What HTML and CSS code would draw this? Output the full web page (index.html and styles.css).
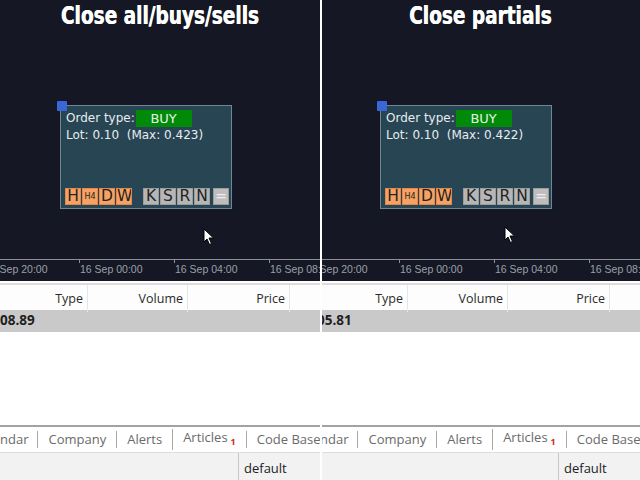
FILE: index.html
```html
<!DOCTYPE html>
<html>
<head>
<meta charset="utf-8">
<link rel="stylesheet" href="styles.css">
</head>
<body>
<div class="screen">
  <section class="pane">
    <div class="chart">
      <h1 class="title"><span class="title-text">Close all/buys/sells</span></h1>
      <div class="stage">
        <div class="handle"></div>
        <div class="trade-box">
          <div class="line">Order type: <span class="kind">BUY</span></div>
          <div class="line">Lot: 0.10&nbsp; (Max: 0.423)</div>
          <div class="keys">
            <span class="key hot">H</span><span class="key hot small">H4</span><span class="key hot">D</span><span class="key hot">W</span>
            <span class="key gap">K</span><span class="key">S</span><span class="key">R</span><span class="key">N</span><span class="key eq">=</span>
          </div>
        </div>
        <svg class="pointer" viewBox="0 0 12 18" width="12" height="18"><path d="M1 1 L1 14 L4 11 L6.5 16.5 L8.5 15.5 L6 10 L10.5 10 Z" fill="#fff" stroke="#000" stroke-width="1"/></svg>
      </div>
      <div class="axis">
        <span class="tick">16 Sep 20:00</span><span class="tick">16 Sep 00:00</span><span class="tick">16 Sep 04:00</span><span class="tick">16 Sep 08:00</span>
      </div>
    </div>
    <div class="table">
      <div class="head">
        <span class="col c1">Type</span><span class="col c2">Volume</span><span class="col c3">Price</span><span class="col c4"></span>
      </div>
      <div class="row"><b>08.89</b></div>
    </div>
    <div class="blank"></div>
    <nav class="tabs">
      <span class="tab first">ndar</span><span class="tab">Company</span><span class="tab">Alerts</span><span class="tab">Articles<sub>1</sub></span><span class="tab">Code Base</span>
    </nav>
    <div class="status"><span class="cell wide"></span><span class="cell">default</span></div>
  </section>

  <section class="pane second">
    <div class="chart">
      <h1 class="title"><span class="title-text">Close partials</span></h1>
      <div class="stage">
        <div class="handle"></div>
        <div class="trade-box">
          <div class="line">Order type: <span class="kind">BUY</span></div>
          <div class="line">Lot: 0.10&nbsp; (Max: 0.422)</div>
          <div class="keys">
            <span class="key hot">H</span><span class="key hot small">H4</span><span class="key hot">D</span><span class="key hot">W</span>
            <span class="key gap">K</span><span class="key">S</span><span class="key">R</span><span class="key">N</span><span class="key eq">=</span>
          </div>
        </div>
        <svg class="pointer alt" viewBox="0 0 12 18" width="12" height="18"><path d="M1 1 L1 14 L4 11 L6.5 16.5 L8.5 15.5 L6 10 L10.5 10 Z" fill="#fff" stroke="#000" stroke-width="1"/></svg>
      </div>
      <div class="axis">
        <span class="tick">16 Sep 20:00</span><span class="tick">16 Sep 00:00</span><span class="tick">16 Sep 04:00</span><span class="tick">16 Sep 08:00</span>
      </div>
    </div>
    <div class="table">
      <div class="head">
        <span class="col c1">Type</span><span class="col c2">Volume</span><span class="col c3">Price</span><span class="col c4"></span>
      </div>
      <div class="row"><b class="cut">05.81</b></div>
    </div>
    <div class="blank"></div>
    <nav class="tabs">
      <span class="tab first">ndar</span><span class="tab">Company</span><span class="tab">Alerts</span><span class="tab">Articles<sub>1</sub></span><span class="tab">Code Base</span>
    </nav>
    <div class="status"><span class="cell wide"></span><span class="cell">default</span></div>
  </section>
</div>
</body>
</html>
```

FILE: styles.css
```css
* { box-sizing: border-box; }

html, body {
  margin: 0;
  padding: 0;
  background: #ffffff;
}

.screen {
  display: grid;
  grid-template-columns: 320px 320px;
  width: 640px;
  height: 480px;
  overflow: hidden;
}

.pane {
  position: relative;
  display: flex;
  flex-direction: column;
  height: 480px;
  overflow: hidden;
  background: #ffffff;
}

/* white divider between the two terminals */
.pane.second::before {
  content: "";
  position: absolute;
  left: 0;
  top: 0;
  bottom: 0;
  width: 2px;
  background: #ffffff;
  z-index: 5;
}

/* ---------- chart ---------- */
.chart {
  height: 281px;
  background: #151824;
  display: flex;
  flex-direction: column;
}

.title {
  margin: 0;
  height: 32px;
  padding-top: 1px;
  text-align: center;
  color: #ffffff;
  font-family: "DejaVu Sans", sans-serif;
  font-weight: bold;
  font-size: 25px;
  line-height: 29px;
  white-space: nowrap;
}

.title-text {
  display: inline-block;
  transform: scaleX(0.74);
  transform-origin: center;
  text-shadow: 0.6px 0 0 #ffffff;
}

.stage {
  position: relative;
  flex: 1;
}

.handle {
  position: absolute;
  left: 57px;
  top: 69px;
  width: 10px;
  height: 10px;
  background: #3a66d8;
  border-radius: 1px;
  z-index: 2;
}

.trade-box {
  position: absolute;
  left: 60px;
  top: 73px;
  width: 172px;
  height: 104px;
  background: #284553;
  border: 1px solid #6d8793;
  padding: 4px 0 0 5px;
  color: #e8ecef;
  font-family: "DejaVu Sans", sans-serif;
  font-size: 12px;
  display: flex;
  flex-direction: column;
}

.line {
  height: 17px;
  line-height: 17px;
  white-space: nowrap;
}

.kind {
  display: inline-block;
  width: 56px;
  height: 17px;
  margin-left: -3px;
  background: #008a08;
  color: #e6f2e6;
  font-size: 13px;
  text-align: center;
  line-height: 17px;
  vertical-align: top;
}

.keys {
  margin-top: auto;
  margin-bottom: 3px;
  display: flex;
  gap: 1px;
  margin-left: -1px;
}

.key {
  width: 16px;
  height: 17px;
  background: #b6b6b6;
  border: 1px solid #9c9c9c;
  color: #242424;
  font-size: 15.5px;
  line-height: 15px;
  text-align: center;
  font-family: "DejaVu Sans", sans-serif;
  overflow: hidden;
}

.key.hot {
  background: #f7a262;
  border-color: #e3874a;
}

.key.small {
  font-size: 8px;
  line-height: 15px;
}

.key.gap { margin-left: 10px; }
.key.eq { width: 16px; color: #eeeeee; background: #bebebe; margin-left: 2px; font-size: 14px; }

.pointer {
  position: absolute;
  left: 203px;
  top: 196px;
}
.pointer.alt {
  left: 184px;
  top: 194px;
}

/* time scale */
.axis {
  height: 22px;
  border-top: 1px solid #8c9098;
  margin-top: 1px;
  display: flex;
  margin-left: -16px;
  white-space: nowrap;
  overflow: hidden;
}

.tick {
  position: relative;
  flex: 0 0 95px;
  padding: 3px 0 0 1px;
  color: #9aa0a9;
  font-family: "Liberation Sans", sans-serif;
  font-size: 10.5px;
  line-height: 12px;
}
.tick::before {
  content: "";
  position: absolute;
  left: 0;
  top: 0;
  width: 1px;
  height: 3px;
  background: #8c9098;
}

/* ---------- trade table ---------- */
.table {
  font-family: "Open Sans", "Noto Sans", sans-serif;
  font-size: 12.5px;
  color: #1e1e1e;
}

.head {
  margin-top: 2px;
  border-top: 2px solid #dcdcdc;
  height: 27px;
  display: grid;
  grid-template-columns: 88px 100px 102px 30px;
  background: #fdfdfd;
}

.col {
  text-align: right;
  padding-right: 4px;
  line-height: 27px;
  border-right: 1px solid #e6e6e6;
  color: #2a2a2a;
}
.col.c4 { border-right: none; }

.row {
  height: 22px;
  background: #c9c9c9;
  line-height: 21px;
  font-size: 13.5px;
}
.row b { font-weight: 700; }
.row .cut { margin-left: -3px; }

.blank {
  flex: 1;
  background: #ffffff;
}

/* ---------- bottom tabs ---------- */
.tabs {
  height: 28px;
  border-top: 2px solid #a3a3a3;
  border-bottom: 1px solid #dddddd;
  display: flex;
  align-items: center;
  white-space: nowrap;
  font-family: "Open Sans", "Noto Sans", sans-serif;
  font-size: 13px;
  color: #6a6a6a;
  background: #ffffff;
}

.tab {
  padding: 0 10px;
  border-left: 1px solid #a8a8a8;
  line-height: 17px;
}
.tab.first {
  border-left: none;
  padding-left: 0;
  padding-right: 9px;
}
.tab sub {
  color: #d42020;
  font-size: 9px;
  font-weight: bold;
  margin-left: 3px;
  vertical-align: -3px;
}

/* ---------- status bar ---------- */
.status {
  height: 27px;
  background: #f2f2f2;
  display: flex;
  font-family: "Open Sans", "Noto Sans", sans-serif;
  font-size: 13px;
  color: #1c1c1c;
}
.cell {
  line-height: 31px;
  padding-left: 5px;
  border-left: 1px solid #c9c9c9;
}
.cell.wide {
  width: 238px;
  border-left: none;
}
```
